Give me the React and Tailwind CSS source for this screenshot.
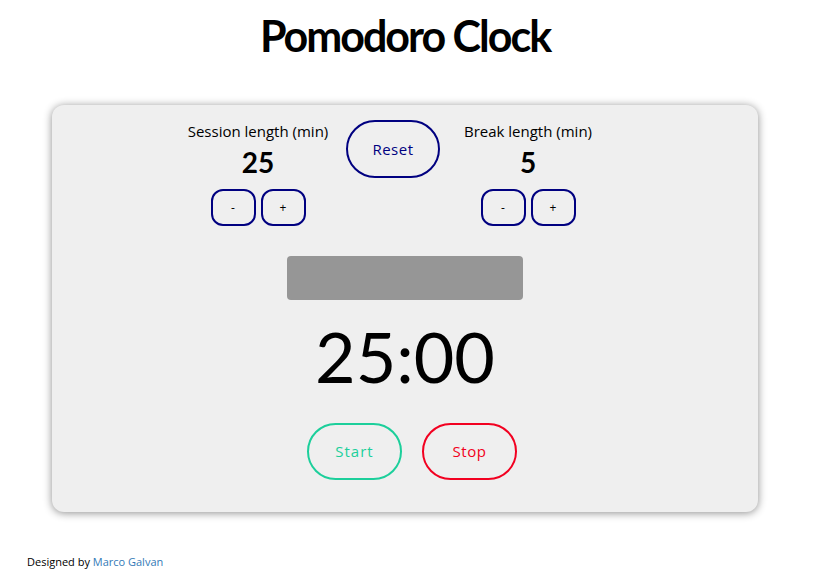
import React from 'react';

const Stepper = ({ label, value }) => (
  <div className="flex w-[150px] flex-col items-center">
    <p className="text-[15px] leading-5 text-black">{label}</p>
    <p className="mt-[4px] font-['Lato'] text-[28px] font-bold leading-[34px] text-black">{value}</p>
    <div className="mt-[10px] flex gap-[5px]">
      <button className="h-[37px] w-[45px] rounded-[12px] border-2 border-[#000080] text-[12px] text-black">-</button>
      <button className="h-[37px] w-[45px] rounded-[12px] border-2 border-[#000080] text-[12px] text-black">+</button>
    </div>
  </div>
);

export default function App() {
  return (
    <div className="min-h-[584px] w-[810px] bg-white font-['Open_Sans',sans-serif]">
      {/* Title */}
      <h1 className="pt-[11px] text-center font-['Lato',sans-serif] text-[43px] font-bold leading-[50px] tracking-[-2px] text-black">
        Pomodoro Clock
      </h1>

      {/* Clock card */}
      <div className="mx-auto mt-[44px] w-[706px] rounded-[12px] bg-[#efefef] pb-[32px] pt-[15px] shadow-[0_1px_8px_rgba(0,0,0,0.45)]">
        <div className="flex items-start gap-[13px] pl-[131px]">
          <div className="pt-[1px]">
            <Stepper label="Session length (min)" value="25" />
          </div>
          <button className="h-[58px] w-[94px] rounded-full border-2 border-[#000080] text-[15px] tracking-[0.5px] text-[#000080]">
            Reset
          </button>
          <div className="pt-[1px]">
            <Stepper label="Break length (min)" value="5" />
          </div>
        </div>

        <div className="mx-auto mt-[30px] h-[44px] w-[236px] rounded-[4px] bg-[#969696]" />

        <p className="mt-[12px] text-center font-['Lato',sans-serif] text-[70px] leading-[88px] text-black">25:00</p>

        <div className="mt-[23px] flex justify-center gap-[20px] pl-[14px]">
          <button className="h-[57px] w-[95px] rounded-full border-2 border-[#1ccf9b] text-[15px] tracking-[1px] text-[#1ccf9b]">
            Start
          </button>
          <button className="h-[57px] w-[95px] rounded-full border-2 border-[#f20020] text-[15px] tracking-[0.5px] text-[#f20020]">
            Stop
          </button>
        </div>
      </div>

      {/* Footer */}
      <p className="ml-[27px] mt-[42px] text-[11px] text-black">
        Designed by <a className="text-[#337ab7]">Marco Galvan</a>
      </p>
    </div>
  );
}
